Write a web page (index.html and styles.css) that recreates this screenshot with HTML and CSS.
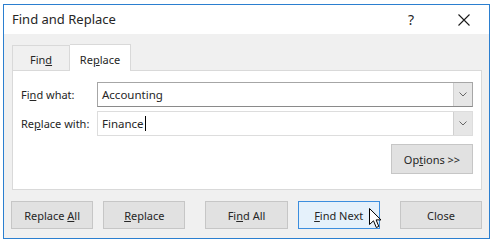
FILE: index.html
```html
<!DOCTYPE html>
<html lang="en">
<head>
    <meta charset="UTF-8">
    <title>Find and Replace</title>
    <link rel="stylesheet" href="styles.css">
</head>
<body>
    <div class="dialog">
        <div class="titlebar">
            <span class="title">Find and Replace</span>
            <span class="help">?</span>
            <span class="close">
                <svg width="12" height="12" viewBox="0 0 12 12"><path d="M0.5 0.5 L11.5 11.5 M11.5 0.5 L0.5 11.5" stroke="#1a1a1a" stroke-width="1.1" fill="none"/></svg>
            </span>
        </div>

        <div class="content">
            <div class="tabs">
                <div class="tab">Fin<u>d</u></div>
                <div class="tab active">Re<u>p</u>lace</div>
            </div>

            <div class="panel">
                <div class="field">
                    <div class="label">Fi<u>n</u>d what:</div>
                    <div class="combo hot">
                        <span class="value">Accounting</span>
                        <div class="drop">
                            <svg width="8" height="5" viewBox="0 0 8 5"><path d="M0.5 0.5 L4 4 L7.5 0.5" stroke="#666" stroke-width="1" fill="none"/></svg>
                        </div>
                    </div>
                </div>
                <div class="field">
                    <div class="label">Re<u>p</u>lace with:</div>
                    <div class="combo">
                        <span class="value">Finance<span class="caret"></span></span>
                        <div class="drop">
                            <svg width="8" height="5" viewBox="0 0 8 5"><path d="M0.5 0.5 L4 4 L7.5 0.5" stroke="#666" stroke-width="1" fill="none"/></svg>
                        </div>
                    </div>
                </div>
                <div class="options-row">
                    <button class="btn options">Op<u>t</u>ions &gt;&gt;</button>
                </div>
            </div>

            <div class="buttons">
                <button class="btn">Replace <u>A</u>ll</button>
                <button class="btn"><u>R</u>eplace</button>
                <button class="btn wide-gap">Fi<u>n</u>d All</button>
                <button class="btn default"><u>F</u>ind Next</button>
                <button class="btn wide-gap">Close</button>
            </div>
        </div>

        <!-- mouse pointer over Find Next -->
        <svg class="pointer" width="13" height="21" viewBox="0 0 13 21">
            <path d="M0.5 0.5 L0.5 16.5 L4.5 12.8 L7.3 19.5 L9.8 18.4 L7.1 11.9 L12 11.9 Z" fill="#fff" stroke="#000" stroke-width="1" stroke-linejoin="round"/>
        </svg>
    </div>
</body>
</html>
```

FILE: styles.css
```css
body {
    margin: 0;
    background: #fff;
    font-family: 'Noto Sans', 'Open Sans', sans-serif;
    color: #262626;
}

.dialog {
    position: relative;
    width: 485px;
    height: 233px;
    margin: 4px 0 0 3px;
    border: 1px solid #2b7fd0;
    background: #f0f0f0;
    display: flex;
    flex-direction: column;
}

.titlebar {
    height: 29px;
    background: #fff;
    display: flex;
    align-items: center;
    padding-left: 8px;
}

.title {
    font-size: 13px;
    flex: 1;
    margin-top: -1px;
}

.help {
    font-size: 14px;
    width: 20px;
    margin-right: 30px;
    margin-top: -1px;
}

.close {
    display: flex;
    margin-right: 19px;
}

.content {
    flex: 1;
    padding: 9px 7px 0 8px;
    display: flex;
    flex-direction: column;
}

.tabs {
    display: flex;
    align-items: flex-end;
    height: 27px;
    font-size: 11px;
}

.tab {
    height: 25px;
    box-sizing: border-box;
    width: 58px;
    border: 1px solid #d9d9d9;
    border-bottom: none;
    display: flex;
    align-items: center;
    justify-content: center;
    padding-top: 2px;
}

.tab.active {
    height: 27px;
    width: 61px;
    background: #fff;
    border-left: none;
    position: relative;
    margin-bottom: -1px;
    z-index: 1;
}

.panel {
    height: 120px;
    box-sizing: border-box;
    background: #fff;
    border: 1px solid #d9d9d9;
    padding: 11px 8px 0 8px;
}

.field {
    display: flex;
    align-items: center;
    margin-bottom: 4px;
    font-size: 11px;
}

.label {
    width: 76px;
    margin-top: -1px;
}

.combo {
    flex: 1;
    height: 25px;
    box-sizing: border-box;
    border: 1px solid #dddddd;
    display: flex;
    align-items: center;
}

.combo.hot {
    border-color: #a6a6a6;
    border-bottom-color: #8a8a8a;
}

.value {
    flex: 1;
    padding-left: 4px;
    font-size: 11.5px;
    display: flex;
    align-items: center;
    margin-top: -1px;
}

.caret {
    display: inline-block;
    width: 1px;
    height: 15px;
    background: #000;
    margin-left: 1px;
}

.drop {
    width: 18px;
    height: 23px;
    background: #e6e6e6;
    border-left: 1px solid #d0d0d0;
    display: flex;
    align-items: center;
    justify-content: center;
}

.options-row {
    display: flex;
    justify-content: flex-end;
    margin-top: 8px;
}

.btn {
    width: 83px;
    height: 28px;
    background: #e1e1e1;
    border: 1px solid #c6c6c6;
    font-family: inherit;
    font-size: 11px;
    color: #262626;
    padding: 0;
    margin: 0;
}

.btn.options {
    height: 30px;
    width: 82px;
}

.btn.default {
    background: #e5f1fb;
    border-color: #3c8ede;
}

.buttons {
    display: flex;
    gap: 10px;
    margin-top: 11px;
    margin-left: -1px;
}

.btn.wide-gap {
    margin-left: 10px;
}

.pointer {
    position: absolute;
    left: 365px;
    top: 203px;
}
```
